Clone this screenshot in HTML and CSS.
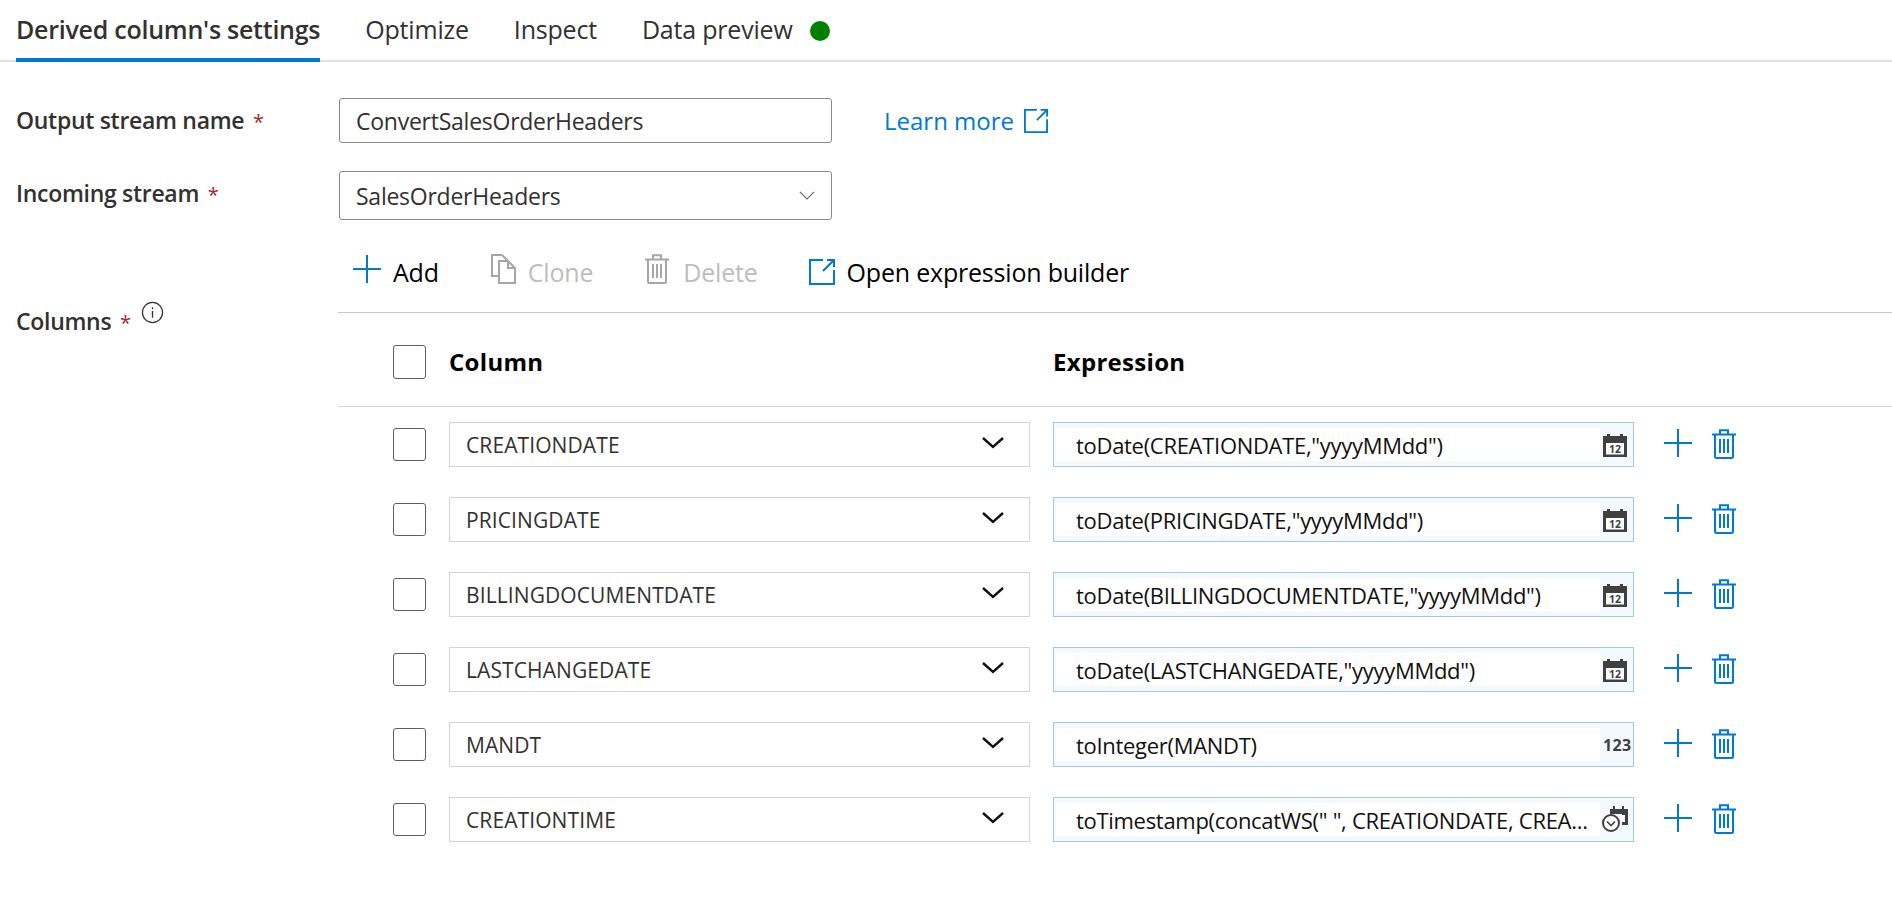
FILE: index.html
```html
<!DOCTYPE html>
<html lang="en">
<head>
<meta charset="utf-8">
<title>Derived column's settings</title>
<link rel="stylesheet" href="styles.css">
</head>
<body>
<svg class="defs" width="0" height="0" aria-hidden="true">
  <symbol id="plus" viewBox="0 0 28 28"><path d="M14 0v28M0 14h28" fill="none" stroke="currentColor" stroke-width="2"/></symbol>
  <symbol id="trash" viewBox="0 0 24 30"><path d="M0 5.5h24M8 5V1.2h8V5M3 6v21.5a1.5 1.5 0 0 0 1.5 1.5h15a1.5 1.5 0 0 0 1.5-1.5V6M8 10v14M12 10v14M16 10v14" fill="none" stroke="currentColor" stroke-width="2"/></symbol>
  <symbol id="open" viewBox="0 0 26 26"><path d="M14 1H1v24h24V11M14 12L25 1M18 1h7v7" fill="none" stroke="currentColor" stroke-width="2"/></symbol>
  <symbol id="chev" viewBox="0 0 22 12"><path d="M1 1l10 9 10-9" fill="none" stroke="currentColor" stroke-width="2.4"/></symbol>
</svg>

<nav class="tabs">
  <span class="tab active">Derived column's settings</span>
  <span class="tab">Optimize</span>
  <span class="tab">Inspect</span>
  <span class="tab">Data preview<i class="dot"></i></span>
</nav>

<section class="form">
  <div class="field f1">
    <label class="lbl">Output stream name <b class="req">*</b></label>
    <div class="box">ConvertSalesOrderHeaders</div>
    <a class="learn">Learn more <svg class="learn-i"><use href="#open"/></svg></a>
  </div>
  <div class="field f2">
    <label class="lbl">Incoming stream <b class="req">*</b></label>
    <div class="box sel">SalesOrderHeaders
      <svg class="sel-i" viewBox="0 0 18 10"><path d="M1 1l8 8 8-8" fill="none" stroke="#605e5c" stroke-width="1.3"/></svg>
    </div>
  </div>
  <div class="cols">
    <label class="lbl cols-lbl">Columns <b class="req">*</b>
      <svg class="info" viewBox="0 0 24 24"><circle cx="12" cy="12" r="10.5" fill="none" stroke="#323130" stroke-width="1.3"/><path d="M12 10.5v7M12 6.5v2" stroke="#323130" stroke-width="1.4"/></svg>
    </label>
    <div class="cols-main">
      <div class="toolbar">
        <span class="tool t-add"><svg class="i-plus"><use href="#plus"/></svg>Add</span>
        <span class="tool off t-clone">
          <svg class="i-clone" viewBox="0 0 25 30"><path d="M8 22H1V1h10l6 6M8 7h9l7 7v15H8zM17 7v7h7" fill="#fff" stroke="#a6a6a6" stroke-width="2"/></svg>Clone</span>
        <span class="tool off t-del"><svg class="i-trash"><use href="#trash"/></svg>Delete</span>
        <span class="tool t-open"><svg class="i-open"><use href="#open"/></svg>Open expression builder</span>
      </div>
      <div class="head">
        <i class="check big"></i>
        <b class="h-col">Column</b>
        <b class="h-exp">Expression</b>
      </div>
      <div class="rows">
        <div class="row"><i class="check"></i><div class="col">CREATIONDATE<svg class="chev"><use href="#chev"/></svg></div><div class="exp"><span class="exp-t">toDate(CREATIONDATE,"yyyyMMdd")</span><svg class="type" viewBox="0 0 24 24"><path d="M0 3h4V1h3v2h10V1h3v2h4v21H0z" fill="#404040"/><rect x="3" y="10" width="18" height="11.5" fill="#fff"/><text class="cal-n" x="12" y="20">12</text></svg></div><svg class="r-plus"><use href="#plus"/></svg><svg class="r-trash"><use href="#trash"/></svg></div>
        <div class="row"><i class="check"></i><div class="col">PRICINGDATE<svg class="chev"><use href="#chev"/></svg></div><div class="exp"><span class="exp-t">toDate(PRICINGDATE,"yyyyMMdd")</span><svg class="type" viewBox="0 0 24 24"><path d="M0 3h4V1h3v2h10V1h3v2h4v21H0z" fill="#404040"/><rect x="3" y="10" width="18" height="11.5" fill="#fff"/><text class="cal-n" x="12" y="20">12</text></svg></div><svg class="r-plus"><use href="#plus"/></svg><svg class="r-trash"><use href="#trash"/></svg></div>
        <div class="row"><i class="check"></i><div class="col">BILLINGDOCUMENTDATE<svg class="chev"><use href="#chev"/></svg></div><div class="exp"><span class="exp-t">toDate(BILLINGDOCUMENTDATE,"yyyyMMdd")</span><svg class="type" viewBox="0 0 24 24"><path d="M0 3h4V1h3v2h10V1h3v2h4v21H0z" fill="#404040"/><rect x="3" y="10" width="18" height="11.5" fill="#fff"/><text class="cal-n" x="12" y="20">12</text></svg></div><svg class="r-plus"><use href="#plus"/></svg><svg class="r-trash"><use href="#trash"/></svg></div>
        <div class="row"><i class="check"></i><div class="col">LASTCHANGEDATE<svg class="chev"><use href="#chev"/></svg></div><div class="exp"><span class="exp-t">toDate(LASTCHANGEDATE,"yyyyMMdd")</span><svg class="type" viewBox="0 0 24 24"><path d="M0 3h4V1h3v2h10V1h3v2h4v21H0z" fill="#404040"/><rect x="3" y="10" width="18" height="11.5" fill="#fff"/><text class="cal-n" x="12" y="20">12</text></svg></div><svg class="r-plus"><use href="#plus"/></svg><svg class="r-trash"><use href="#trash"/></svg></div>
        <div class="row"><i class="check"></i><div class="col">MANDT<svg class="chev"><use href="#chev"/></svg></div><div class="exp"><span class="exp-t">toInteger(MANDT)</span><span class="num">123</span></div><svg class="r-plus"><use href="#plus"/></svg><svg class="r-trash"><use href="#trash"/></svg></div>
        <div class="row"><i class="check"></i><div class="col">CREATIONTIME<svg class="chev"><use href="#chev"/></svg></div><div class="exp"><span class="exp-t">toTimestamp(concatWS(" ", CREATIONDATE, CREA...</span><svg class="type time" viewBox="0 0 26 26"><path d="M8 3h3V0h2v3h7V0h2v3h4v16h-6V8H8z" fill="#404040"/><path d="M17 9h6v7h-6z" fill="#fff"/><circle cx="9" cy="17" r="8" fill="#fff" stroke="#404040" stroke-width="2"/><path d="M5 15.5l4 4 4-4" fill="none" stroke="#404040" stroke-width="1.6"/></svg></div><svg class="r-plus"><use href="#plus"/></svg><svg class="r-trash"><use href="#trash"/></svg></div>
      </div>
    </div>
  </div>
</section>
</body>
</html>
```
FILE: styles.css
```css
* { box-sizing: border-box; }
html, body { margin: 0; height: 100%; background: #fff; overflow: hidden; }
body { font-family: "Open Sans", "Noto Sans", sans-serif; font-size: 23px; color: #323130; letter-spacing: -0.25px; }
.defs { position: absolute; }

.tabs { height: 62px; display: flex; gap: 45px; padding-left: 16px; border-bottom: 2px solid #e1dfdd; }
.tab { height: 62px; font-size: 25px; display: flex; align-items: center; padding-bottom: 4px; letter-spacing: -0.2px; }
.tab.active { font-weight: 600; border-bottom: 4px solid #0078d4; padding-bottom: 0; letter-spacing: -0.25px; }
.dot { width: 20px; height: 20px; border-radius: 50%; background: #008000; margin-left: 17px; margin-top: 4px; }

.form { padding-left: 16px; }
.field { display: flex; align-items: center; }
.f1 { margin-top: 36px; height: 45px; }
.f2 { margin-top: 28px; height: 49px; }
.lbl { width: 323px; flex: none; font-weight: 600; font-size: 23px; letter-spacing: -0.3px; }
.f1 .lbl { margin-top: -2px; }
.f2 .lbl { margin-top: -6px; }
.req { color: #a4262c; font-weight: 400; margin-left: 3px; font-size: 20px; }
.box { width: 493px; height: 100%; border: 1px solid #8a8886; border-radius: 3px; display: flex; align-items: center; padding-left: 16px; color: #323130; justify-content: space-between; }
.sel-i { width: 16px; height: 9px; margin-right: 16px; }
.learn { margin-left: 52px; color: #0078d4; display: flex; align-items: center; font-size: 24px; letter-spacing: 0; }
.learn-i { width: 24px; height: 24px; margin-left: 10px; color: #0078d4; }

.cols { display: flex; }
.cols-lbl { width: 322px; margin-top: 85px; height: 36px; display: block; position: relative; }
.info { position: absolute; left: 125px; top: -4px; width: 23px; height: 23px; }
.cols-main { flex: 1; min-width: 0; }

.toolbar { height: 93px; display: flex; align-items: center; border-bottom: 1px solid #c8c8c8; padding-top: 11px; font-size: 25px; letter-spacing: -0.2px; color: #000; }
.tool { display: flex; align-items: center; }
.tool svg { flex: none; }
.off { color: #bdbdbd; }
.t-add { margin-left: 15px; }
.i-plus { width: 28px; height: 28px; color: #0078d4; margin-right: 12px; margin-bottom: 5px; }
.t-clone { margin-left: 52px; }
.i-clone { width: 25px; height: 30px; margin-right: 12px; margin-bottom: 5px; }
.t-del { margin-left: 52px; }
.i-trash { width: 24px; height: 30px; margin-right: 14px; margin-bottom: 5px; color: #a6a6a6; }
.t-open { margin-left: 51px; }
.i-open { width: 26px; height: 26px; color: #0078d4; margin-right: 12px; }

.head { height: 94px; display: flex; align-items: center; border-bottom: 1px solid #d8d8d8; padding-top: 3px; font-size: 24px; letter-spacing: 0.3px; color: #000; }
.check { display: block; flex: none; width: 33px; height: 33px; border: 1px solid #605e5c; border-radius: 3px; margin-left: 55px; }
.check.big { height: 34px; margin-top: 2px; }
.h-col { margin-left: 23px; width: 604px; }

.rows { padding-top: 15px; display: flex; flex-direction: column; gap: 30px; }
.row { height: 45px; display: flex; align-items: center; }
.col { margin-left: 23px; width: 581px; height: 45px; border: 1px solid #d4d4d4; display: flex; align-items: center; justify-content: space-between; padding: 0 25px 0 16px; font-size: 21px; letter-spacing: 0.1px; color: #323130; flex: none; }
.chev { width: 22px; height: 12px; color: #111; margin-bottom: 4px; }
.exp { margin-left: 23px; width: 581px; height: 45px; flex: none; border: 1px solid #a3c9e9; background: #f4f9fe; padding: 5px 0 5px 2px; display: flex; align-items: center; }
.exp-t { background: #fff; width: 544px; height: 100%; padding-left: 20px; display: flex; align-items: center; font-size: 22px; letter-spacing: -0.3px; color: #111; white-space: nowrap; overflow: hidden; flex: none; }
.type { width: 24px; height: 24px; margin-left: 3px; flex: none; }
.type.time { width: 26px; height: 26px; margin-left: 2px; margin-bottom: 2px; }
.cal-n { font-family: "Noto Sans", sans-serif; font-size: 10.5px; font-weight: 700; fill: #404040; text-anchor: middle; letter-spacing: 0; }
.num { font-size: 16px; font-weight: 700; color: #404040; letter-spacing: 0.3px; margin-left: 3px; }
.r-plus { width: 28px; height: 28px; margin-left: 30px; margin-bottom: 3px; color: #0078d4; flex: none; }
.r-trash { width: 24px; height: 30px; margin-left: 20px; margin-bottom: 2px; color: #0078d4; flex: none; }
```
